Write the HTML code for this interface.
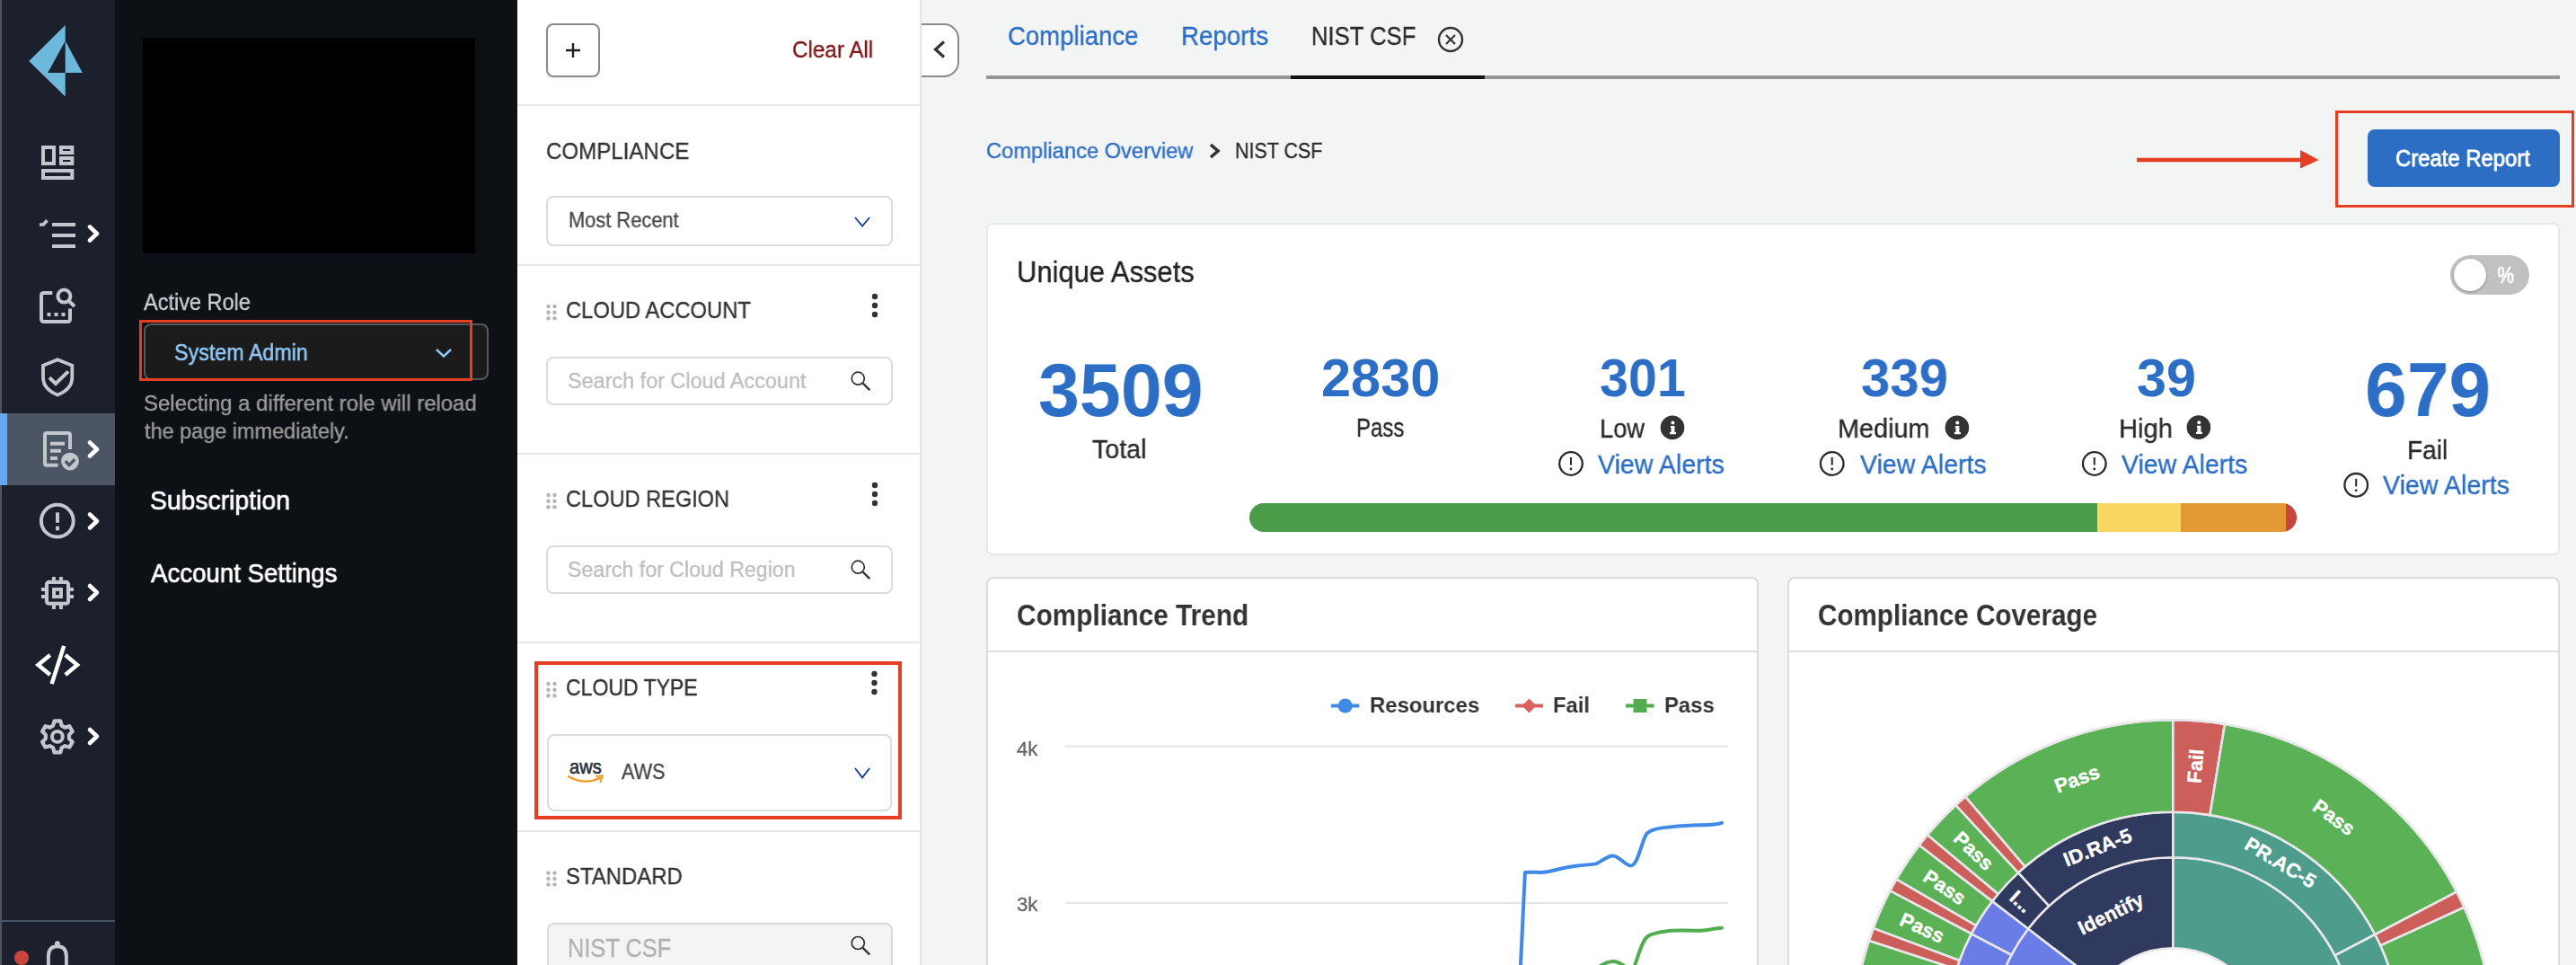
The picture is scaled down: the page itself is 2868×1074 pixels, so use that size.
<!DOCTYPE html>
<html><head><meta charset="utf-8">
<style>
*{margin:0;padding:0;box-sizing:border-box}
html,body{width:2868px;height:1074px;overflow:hidden;background:#f3f4f4;font-family:"Liberation Sans",sans-serif}
.abs{position:absolute}
.t{position:absolute;white-space:nowrap;line-height:1;transform-origin:0 0;will-change:transform}
</style></head><body>
<!-- left strip + sidebar -->
<div class="abs" style="left:0;top:0;width:2px;height:1074px;background:#50555e"></div>
<div class="abs" style="left:2px;top:0;width:126px;height:1074px;background:#1b202c"></div>
<div class="abs" style="left:0;top:460px;width:128px;height:80px;background:#4b5563"></div>
<div class="abs" style="left:0;top:460px;width:8px;height:80px;background:#63a9f6"></div>
<div class="abs" style="left:0;top:1024px;width:128px;height:2px;background:#4a5262"></div>
<!-- panel 2 -->
<div class="abs" style="left:128px;top:0;width:448px;height:1074px;background:#0d1116"></div>
<div class="abs" style="left:159px;top:42px;width:370px;height:240px;background:#000"></div>
<div class="abs" style="left:160px;top:360px;width:384px;height:63px;background:#1b1b1c;border:2px solid #58595b;border-radius:8px"></div>
<div class="abs" style="left:155px;top:356px;width:371px;height:68px;border:3px solid #e63d25"></div>
<!-- filter panel -->
<div class="abs" style="left:576px;top:0;width:448px;height:1074px;background:#fff"></div>
<div class="abs" style="left:1024px;top:0;width:2px;height:1074px;background:#e4e5e5"></div>
<div class="abs" style="left:576px;top:116px;width:448px;height:2px;background:#e8e8e8"></div>
<div class="abs" style="left:576px;top:294px;width:448px;height:2px;background:#e8e8e8"></div>
<div class="abs" style="left:576px;top:504px;width:448px;height:2px;background:#e8e8e8"></div>
<div class="abs" style="left:576px;top:714px;width:448px;height:2px;background:#e8e8e8"></div>
<div class="abs" style="left:576px;top:924px;width:448px;height:2px;background:#e8e8e8"></div>
<div class="abs" style="left:608px;top:26px;width:60px;height:60px;border:2px solid #8a8a8a;border-radius:8px;box-shadow:0 2px 3px rgba(0,0,0,0.05)"></div>
<div class="abs" style="left:608px;top:218px;width:386px;height:56px;border:2px solid #dcdcdc;border-radius:8px"></div>
<div class="abs" style="left:608px;top:397px;width:386px;height:54px;border:2px solid #dcdcdc;border-radius:8px"></div>
<div class="abs" style="left:608px;top:607px;width:386px;height:54px;border:2px solid #dcdcdc;border-radius:8px"></div>
<div class="abs" style="left:609px;top:817px;width:384px;height:86px;border:2px solid #dcdcdc;border-radius:8px"></div>
<div class="abs" style="left:609px;top:1027px;width:385px;height:80px;background:#f4f4f4;border:2px solid #d9d9d9;border-radius:8px"></div>
<div class="abs" style="left:595px;top:736px;width:409px;height:176px;border:4px solid #e63d25"></div>
<!-- main -->
<div class="abs" style="left:1026px;top:26px;width:42px;height:60px;background:#fff;border:2px solid #8a8a8a;border-left:none;border-radius:0 17px 17px 0"></div>
<div class="abs" style="left:1098px;top:84px;width:1752px;height:4px;background:#959595"></div>
<div class="abs" style="left:1437px;top:83.5px;width:216px;height:4.5px;background:#111"></div>
<div class="abs" style="left:2600px;top:123px;width:266px;height:108px;border:3px solid #e63d25"></div>
<div class="abs" style="left:2636px;top:144px;width:214px;height:64px;background:#2d6ec5;border-radius:8px"></div>
<!-- unique assets card -->
<div class="abs" style="left:1098px;top:248px;width:1752px;height:370px;background:#fff;border:2px solid #e7e9e9;border-radius:7px"></div>
<div class="abs" style="left:2728px;top:284px;width:88px;height:44px;background:#c1c1c1;border-radius:22px"></div>
<div class="abs" style="left:2732px;top:288px;width:36px;height:36px;background:#fff;border-radius:50%;box-shadow:0 1px 3px rgba(0,0,0,.3)"></div>
<svg class="abs" style="left:1391px;top:560px" width="1166" height="32" viewBox="0 0 1166 32">
 <defs><clipPath id="pb"><rect x="0" y="0" width="1166" height="32" rx="16" ry="16"/></clipPath></defs>
 <g clip-path="url(#pb)">
  <rect x="0" y="0" width="945" height="32" fill="#4a9c48"/>
  <rect x="944" y="0" width="94" height="32" fill="#f9d660"/>
  <rect x="1037" y="0" width="118" height="32" fill="#e39a35"/>
  <rect x="1154" y="0" width="12" height="32" fill="#c4463e"/>
 </g>
</svg>
<!-- chart cards -->
<div class="abs" style="left:1098px;top:642px;width:860px;height:500px;background:#fff;border:2px solid #dadbdb;border-radius:8px"></div>
<div class="abs" style="left:1100px;top:724px;width:856px;height:2px;background:#dcdddd"></div>
<div class="abs" style="left:1990px;top:642px;width:860px;height:500px;background:#fff;border:2px solid #dadbdb;border-radius:8px"></div>
<div class="abs" style="left:1992px;top:724px;width:856px;height:2px;background:#dcdddd"></div>

<svg class="abs" style="left:0;top:0" width="2868" height="1074" viewBox="0 0 2868 1074">
<defs><clipPath id="cc"><rect x="1993" y="727" width="854" height="347"/></clipPath></defs>
<g clip-path="url(#cc)">
<path d="M2258.03,1033.78 A203.4,203.4 0 0 1 2419.40,954.20 L2419.40,1055.30 A102.3,102.3 0 0 0 2338.24,1095.32 Z" fill="#30395e" stroke="#e9e7ea" stroke-width="2.6"/><path d="M2419.40,954.20 A203.4,203.4 0 0 1 2595.55,1259.30 L2507.99,1208.75 A102.3,102.3 0 0 0 2419.40,1055.30 Z" fill="#4e9c8b" stroke="#e9e7ea" stroke-width="2.6"/><path d="M2243.25,1259.30 A203.4,203.4 0 0 1 2258.03,1033.78 L2338.24,1095.32 A102.3,102.3 0 0 0 2330.81,1208.75 Z" fill="#6a7ce8" stroke="#e9e7ea" stroke-width="2.6"/><path d="M2246.96,971.38 A253.8,253.8 0 0 1 2419.40,903.80 L2419.40,954.20 A203.4,203.4 0 0 0 2281.20,1008.36 Z" fill="#30395e" stroke="#e9e7ea" stroke-width="2.6"/><path d="M2218.05,1003.10 A253.8,253.8 0 0 1 2246.96,971.38 L2281.20,1008.36 A203.4,203.4 0 0 0 2258.03,1033.78 Z" fill="#30395e" stroke="#e9e7ea" stroke-width="2.6"/><path d="M2194.79,1039.43 A253.8,253.8 0 0 1 2218.05,1003.10 L2258.03,1033.78 A203.4,203.4 0 0 0 2239.39,1062.89 Z" fill="#6a7ce8" stroke="#e9e7ea" stroke-width="2.6"/><path d="M2178.02,1079.17 A253.8,253.8 0 0 1 2194.79,1039.43 L2239.39,1062.89 A203.4,203.4 0 0 0 2225.96,1094.75 Z" fill="#6a7ce8" stroke="#e9e7ea" stroke-width="2.6"/><path d="M2168.23,1121.18 A253.8,253.8 0 0 1 2178.02,1079.17 L2225.96,1094.75 A203.4,203.4 0 0 0 2218.10,1128.41 Z" fill="#6a7ce8" stroke="#e9e7ea" stroke-width="2.6"/><path d="M2165.69,1164.24 A253.8,253.8 0 0 1 2168.23,1121.18 L2218.10,1128.41 A203.4,203.4 0 0 0 2216.07,1162.92 Z" fill="#6a7ce8" stroke="#e9e7ea" stroke-width="2.6"/><path d="M2419.40,903.80 A253.8,253.8 0 0 1 2644.32,1040.02 L2599.65,1063.37 A203.4,203.4 0 0 0 2419.40,954.20 Z" fill="#4e9c8b" stroke="#e9e7ea" stroke-width="2.6"/><path d="M2644.32,1040.02 A253.8,253.8 0 0 1 2639.20,1284.50 L2595.55,1259.30 A203.4,203.4 0 0 0 2599.65,1063.37 Z" fill="#4e9c8b" stroke="#e9e7ea" stroke-width="2.6"/><path d="M2188.00,886.67 A356.3,356.3 0 0 1 2419.40,801.30 L2419.40,903.80 A253.8,253.8 0 0 0 2254.57,964.61 Z" fill="#5ab156" stroke="#e9e7ea" stroke-width="2.6"/><path d="M2177.32,896.17 A356.3,356.3 0 0 1 2188.00,886.67 L2254.57,964.61 A253.8,253.8 0 0 0 2246.96,971.38 Z" fill="#cd5f5a" stroke="#e9e7ea" stroke-width="2.6"/><path d="M2145.86,929.29 A356.3,356.3 0 0 1 2177.32,896.17 L2246.96,971.38 A253.8,253.8 0 0 0 2224.55,994.97 Z" fill="#5ab156" stroke="#e9e7ea" stroke-width="2.6"/><path d="M2136.73,940.70 A356.3,356.3 0 0 1 2145.86,929.29 L2224.55,994.97 A253.8,253.8 0 0 0 2218.05,1003.10 Z" fill="#cd5f5a" stroke="#e9e7ea" stroke-width="2.6"/><path d="M2111.30,978.64 A356.3,356.3 0 0 1 2136.73,940.70 L2218.05,1003.10 A253.8,253.8 0 0 0 2199.94,1030.13 Z" fill="#5ab156" stroke="#e9e7ea" stroke-width="2.6"/><path d="M2104.22,991.43 A356.3,356.3 0 0 1 2111.30,978.64 L2199.94,1030.13 A253.8,253.8 0 0 0 2194.89,1039.23 Z" fill="#cd5f5a" stroke="#e9e7ea" stroke-width="2.6"/><path d="M2085.55,1033.11 A356.3,356.3 0 0 1 2104.22,991.43 L2194.89,1039.23 A253.8,253.8 0 0 0 2181.60,1068.92 Z" fill="#5ab156" stroke="#e9e7ea" stroke-width="2.6"/><path d="M2080.73,1046.91 A356.3,356.3 0 0 1 2085.55,1033.11 L2181.60,1068.92 A253.8,253.8 0 0 0 2178.16,1078.75 Z" fill="#cd5f5a" stroke="#e9e7ea" stroke-width="2.6"/><path d="M2069.35,1091.14 A356.3,356.3 0 0 1 2080.73,1046.91 L2178.16,1078.75 A253.8,253.8 0 0 0 2170.05,1110.26 Z" fill="#5ab156" stroke="#e9e7ea" stroke-width="2.6"/><path d="M2066.92,1105.55 A356.3,356.3 0 0 1 2069.35,1091.14 L2170.05,1110.26 A253.8,253.8 0 0 0 2168.32,1120.52 Z" fill="#cd5f5a" stroke="#e9e7ea" stroke-width="2.6"/><path d="M2063.16,1151.07 A356.3,356.3 0 0 1 2066.92,1105.55 L2168.32,1120.52 A253.8,253.8 0 0 0 2165.64,1152.95 Z" fill="#5ab156" stroke="#e9e7ea" stroke-width="2.6"/><path d="M2063.19,1165.68 A356.3,356.3 0 0 1 2063.16,1151.07 L2165.64,1152.95 A253.8,253.8 0 0 0 2165.67,1163.36 Z" fill="#cd5f5a" stroke="#e9e7ea" stroke-width="2.6"/><path d="M2419.40,801.30 A356.3,356.3 0 0 1 2476.98,805.98 L2460.42,907.14 A253.8,253.8 0 0 0 2419.40,903.80 Z" fill="#cd5f5a" stroke="#e9e7ea" stroke-width="2.6"/><path d="M2476.98,805.98 A356.3,356.3 0 0 1 2735.15,992.53 L2644.32,1040.02 A253.8,253.8 0 0 0 2460.42,907.14 Z" fill="#5ab156" stroke="#e9e7ea" stroke-width="2.6"/><path d="M2735.15,992.53 A356.3,356.3 0 0 1 2743.62,1009.84 L2650.35,1052.35 A253.8,253.8 0 0 0 2644.32,1040.02 Z" fill="#cd5f5a" stroke="#e9e7ea" stroke-width="2.6"/><path d="M2743.62,1009.84 A356.3,356.3 0 0 1 2727.96,1335.75 L2639.20,1284.50 A253.8,253.8 0 0 0 2650.35,1052.35 Z" fill="#5ab156" stroke="#e9e7ea" stroke-width="2.6"/>
<circle cx="2419.4" cy="1157.6" r="356.3" fill="none" stroke="#e9e7ea" stroke-width="2.6"/>
<g fill="#ffffff" stroke="#ffffff" stroke-width="0.4" font-family="Liberation Sans" font-weight="700" text-anchor="middle"><text x="2312.4" y="866.7" transform="rotate(-20.2 2312.4 866.7)" font-size="22" dy="0.35em">Pass</text><text x="2444.2" y="852.6" transform="rotate(-85.3 2444.2 852.6)" font-size="22" dy="0.35em">Fail</text><text x="2598.6" y="909.6" transform="rotate(35.9 2598.6 909.6)" font-size="22" dy="0.35em">Pass</text><text x="2539.1" y="960.0" transform="rotate(31.2 2539.1 960.0)" font-size="22" dy="0.35em">PR.AC-5</text><text x="2335.3" y="943.0" transform="rotate(-21.4 2335.3 943.0)" font-size="22" dy="0.35em">ID.RA-5</text><text x="2350.0" y="1016.8" transform="rotate(-26.2 2350.0 1016.8)" font-size="22" dy="0.35em">Identify</text><text x="2250.2" y="1003.3" transform="rotate(42.4 2250.2 1003.3)" font-size="22" dy="0.35em">I...</text><text x="2197.5" y="946.9" transform="rotate(43.5 2197.5 946.9)" font-size="22" dy="0.35em">Pass</text><text x="2165.2" y="987.3" transform="rotate(33.8 2165.2 987.3)" font-size="22" dy="0.35em">Pass</text><text x="2140.1" y="1032.5" transform="rotate(24.1 2140.1 1032.5)" font-size="22" dy="0.35em">Pass</text></g>
</g></svg>

<svg class="abs" style="left:0;top:0" width="2868" height="1074" viewBox="0 0 2868 1074">
 <!-- logo -->
 <path d="M72.7,28.1 L32.2,67.9 L72.7,107.6 Z M72.7,45.4 L53.2,81 L72.7,81 Z" fill="#6cb9dc" fill-rule="evenodd"/>
 <path d="M72.7,45.4 L91.8,81 L72.7,81 Z" fill="#6cb9dc"/>
 <g fill="none" stroke="#c2c6cd" stroke-width="4">
  <!-- dashboard -->
  <rect x="48" y="164" width="12" height="18"/>
  <rect x="68" y="164" width="12.3" height="6"/>
  <rect x="68" y="176" width="12.3" height="6"/>
  <rect x="48" y="190" width="32.3" height="8"/>
  <!-- list -->
  <path d="M58,250 H84 M58,262 H84 M58,274 H84" />
  <path d="M44,250 H48.3 L52.5,245.3" stroke-width="3.6"/>
  <!-- search doc -->
  <path d="M58.3,326 H49 Q46,326 46,329 V355 Q46,358 49,358 H75 Q78,358 78,355 V343.4"/>
  <circle cx="71.4" cy="329.6" r="7"/>
  <path d="M76.5,334.7 L83,341"/>
  <!-- shield -->
  <path d="M64.1,400.3 L48,406.8 V420 Q48,433 64.1,439.6 Q80.3,433 80.3,420 V406.8 Z" stroke-width="3.8"/>
  <path d="M55,420.3 L62,427 L76,413.4" stroke-width="4"/>
  <!-- report -->
  <path d="M64.5,517.8 H52 Q50,517.8 50,515.8 V484 Q50,482 52,482 H76 Q78,482 78,484 V500"/>
  <path d="M56,493.8 H72 M56,501.7 H68 M56,510 H64"/>
  <!-- alert -->
  <circle cx="63.8" cy="579.7" r="17.9"/>
  <!-- chip -->
  <rect x="51.95" y="647.85" width="24.1" height="23.9" rx="2.5" stroke-width="4.1"/>
  <rect x="60.05" y="655.95" width="7.9" height="8.1" stroke-width="4"/>
  <path d="M59.95,642 V648 M67.95,642 V648 M59.95,671.5 V678 M67.95,671.5 V678 M46,655.95 H52 M46,663.95 H52 M76,655.95 H82 M76,663.95 H82" stroke-width="4"/>
  <!-- gear -->
  <circle cx="63.9" cy="819.9" r="5.9"/>
 </g>
 <circle cx="78" cy="513.6" r="9.9" fill="#c2c6cd"/>
 <path d="M72.8,513.3 L77,517.6 L83.2,511.3" fill="none" stroke="#4b5563" stroke-width="3.4"/>
 <rect x="62" y="570.4" width="4" height="11.4" fill="#c2c6cd"/>
 <rect x="62" y="585.7" width="4" height="4.6" fill="#c2c6cd"/>
 <rect x="52.5" y="348" width="4" height="4" fill="#c2c6cd"/>
 <rect x="60.5" y="348" width="4" height="4" fill="#c2c6cd"/>
 <rect x="68.5" y="348" width="4" height="4" fill="#c2c6cd"/>
 <!-- gear teeth -->
 <path id="gear" fill="none" stroke="#c2c6cd" stroke-width="4.2" stroke-linejoin="round" d="M59.17,807.58 L60.50,802.43 L67.30,802.43 L68.63,807.58 L72.21,809.64 L77.33,808.22 L80.73,814.10 L76.94,817.84 L76.94,821.96 L80.73,825.70 L77.33,831.58 L72.21,830.16 L68.63,832.22 L67.30,837.37 L60.50,837.37 L59.17,832.22 L55.59,830.16 L50.47,831.58 L47.07,825.70 L50.86,821.96 L50.86,817.84 L47.07,814.10 L50.47,808.22 L55.59,809.64 Z"/>
 <!-- code -->
 <g fill="none" stroke="#ffffff" stroke-width="4.5" stroke-linecap="square">
  <path d="M54,730.5 L42.5,740 L54,749.5"/>
  <path d="M74.5,730.5 L86,740 L74.5,749.5"/>
  <path d="M70.5,721 L58.3,759"/>
 </g>
 <!-- chevrons -->
 <g fill="none" stroke="#ffffff" stroke-width="4.6" stroke-linecap="round" stroke-linejoin="round">
  <path d="M100,252.5 L108,260 L100,267.5"/>
  <path d="M100,492.5 L108,500 L100,507.5"/>
  <path d="M100,572.5 L108,580 L100,587.5"/>
  <path d="M100,652 L108,659.5 L100,667"/>
  <path d="M100,812 L108,819.5 L100,827"/>
 </g>
 <!-- bottom -->
 <circle cx="24" cy="1066" r="8" fill="#c9463e"/>
 <path d="M53.9,1074 V1064.5 Q53.9,1053.3 63.9,1053.3 Q73.9,1053.3 73.9,1064.5 V1074" fill="none" stroke="#c2c6cd" stroke-width="3.9"/>
 <circle cx="63.9" cy="1050.3" r="3" fill="#c2c6cd"/>
 <!-- role chevron -->
 <path d="M486,389 L494,396.5 L502,389" fill="none" stroke="#8ec6f6" stroke-width="2.4"/>
 <!-- filter icons -->
 <path d="M630,56 H646 M638,48 V64" stroke="#222" stroke-width="2.4"/>
 <path d="M952,242 L960.1,251.6 L968.2,242" fill="none" stroke="#15439a" stroke-width="1.9"/>
 <path d="M952,855 L960.1,865.4 L968.2,855" fill="none" stroke="#15439a" stroke-width="1.9"/>
 <g fill="none" stroke="#333" stroke-width="2.4">
  <circle cx="955.3" cy="421.2" r="7" stroke-width="1.7"/><path d="M960.6,426.5 L968.3,434.2"/>
  <circle cx="955.3" cy="631.2" r="7" stroke-width="1.7"/><path d="M960.6,636.5 L968.3,644.2"/>
  <circle cx="955.3" cy="1049.5" r="7" stroke-width="1.7"/><path d="M960.6,1054.8 L968.3,1062.5"/>
 </g>
 <g fill="#333">
  <circle cx="974" cy="330" r="3.2"/><circle cx="974" cy="340" r="3.2"/><circle cx="974" cy="350" r="3.2"/>
  <circle cx="974" cy="540" r="3.2"/><circle cx="974" cy="550" r="3.2"/><circle cx="974" cy="560" r="3.2"/>
  <circle cx="973.5" cy="750" r="3.2"/><circle cx="973.5" cy="760" r="3.2"/><circle cx="973.5" cy="770" r="3.2"/>
 </g>
 <g fill="#b3b3b3">
  <circle cx="610.5" cy="341" r="2.2"/><circle cx="617.5" cy="341" r="2.2"/>
  <circle cx="610.5" cy="347.7" r="2.2"/><circle cx="617.5" cy="347.7" r="2.2"/>
  <circle cx="610.5" cy="354.3" r="2.2"/><circle cx="617.5" cy="354.3" r="2.2"/>
  <circle cx="610.5" cy="551" r="2.2"/><circle cx="617.5" cy="551" r="2.2"/>
  <circle cx="610.5" cy="557.7" r="2.2"/><circle cx="617.5" cy="557.7" r="2.2"/>
  <circle cx="610.5" cy="564.3" r="2.2"/><circle cx="617.5" cy="564.3" r="2.2"/>
  <circle cx="610.5" cy="761" r="2.2"/><circle cx="617.5" cy="761" r="2.2"/>
  <circle cx="610.5" cy="767.7" r="2.2"/><circle cx="617.5" cy="767.7" r="2.2"/>
  <circle cx="610.5" cy="774.3" r="2.2"/><circle cx="617.5" cy="774.3" r="2.2"/>
  <circle cx="610.5" cy="971.6" r="2.2"/><circle cx="617.5" cy="971.6" r="2.2"/>
  <circle cx="610.5" cy="978" r="2.2"/><circle cx="617.5" cy="978" r="2.2"/>
  <circle cx="610.5" cy="984.4" r="2.2"/><circle cx="617.5" cy="984.4" r="2.2"/>
 </g>
 <!-- aws logo -->
 <text x="634" y="860.8" font-family="Liberation Sans" font-size="22" font-weight="400" fill="#232f3e" stroke="#232f3e" stroke-width="0.6" textLength="35.7" lengthAdjust="spacingAndGlyphs">aws</text>
 <path d="M633,864.2 Q651,874 667.9,866" fill="none" stroke="#f29a1e" stroke-width="2.3" stroke-linecap="round"/>
 <path d="M664.4,864 L671,863.2 L668.5,870" fill="none" stroke="#f29a1e" stroke-width="2" stroke-linejoin="round" stroke-linecap="round"/>
 <!-- collapse chevron -->
 <path d="M1051,46.5 L1041.5,55 L1051,63.5" fill="none" stroke="#333" stroke-width="3.2"/>
 <!-- tab close -->
 <circle cx="1615" cy="44" r="13" fill="none" stroke="#333" stroke-width="2.4"/>
 <path d="M1610,39 L1620,49 M1620,39 L1610,49" stroke="#333" stroke-width="2.2"/>
 <!-- breadcrumb chevron -->
 <path d="M1348,161 L1356,168 L1348,175" fill="none" stroke="#333" stroke-width="3.6"/>
 <!-- arrow -->
 <path d="M2379,178 H2563" stroke="#e63d25" stroke-width="4.5"/>
 <path d="M2561,167 L2581.6,178 L2561,187.5 Z" fill="#e63d25"/>
 <!-- toggle % -->
 <text x="2780.5" y="315.2" font-family="Liberation Sans" font-size="25" font-weight="400" fill="#fff" stroke="#fff" stroke-width="0.7" textLength="18.5" lengthAdjust="spacingAndGlyphs">%</text>
 <!-- info icons -->
 <g>
  <circle cx="1862" cy="475.9" r="13.3" fill="#333"/>
  <circle cx="2178.9" cy="475.9" r="13.3" fill="#333"/>
  <circle cx="2447.9" cy="475.6" r="13.3" fill="#333"/>
 </g>
 <g fill="#fff">
  <circle cx="1862.4" cy="470.5" r="2"/><path d="M1860,474 H1864.5 V481 H1866 V483.3 H1859 V481 H1860.5 V476 H1860 Z"/>
  <circle cx="2179.3" cy="470.5" r="2"/><path d="M2176.9,474 H2181.4 V481 H2182.9 V483.3 H2175.9 V481 H2177.4 V476 H2176.9 Z"/>
  <circle cx="2448.3" cy="470.2" r="2"/><path d="M2445.9,473.7 H2450.4 V480.7 H2451.9 V483 H2444.9 V480.7 H2446.4 V475.7 H2445.9 Z"/>
 </g>
 <g fill="none" stroke="#2a2a2a" stroke-width="2.3">
  <circle cx="1749" cy="516" r="12.8"/>
  <circle cx="2039.7" cy="516" r="12.8"/>
  <circle cx="2331.8" cy="516" r="12.8"/>
  <circle cx="2623.2" cy="539.8" r="12.8"/>
 </g>
 <g fill="#2a2a2a">
  <rect x="1748" y="509" width="2" height="8.6"/><circle cx="1749" cy="522" r="1.4"/>
  <rect x="2038.7" y="509" width="2" height="8.6"/><circle cx="2039.7" cy="522" r="1.4"/>
  <rect x="2330.8" y="509" width="2" height="8.6"/><circle cx="2331.8" cy="522" r="1.4"/>
  <rect x="2622.2" y="532.8" width="2" height="8.6"/><circle cx="2623.2" cy="545.8" r="1.4"/>
 </g>
 <!-- trend chart -->
 <path d="M1185.7,830.6 H1924 M1185.7,1005 H1924" stroke="#e6e6e6" stroke-width="2.2"/>
 <path d="M1482,785.5 H1513.4" stroke="#3f8ae6" stroke-width="4"/><circle cx="1497.7" cy="785.5" r="8" fill="#3f8ae6"/>
 <path d="M1687,785.5 H1718" stroke="#d9625e" stroke-width="4"/><path d="M1702.5,777.5 L1710.5,785.5 L1702.5,793.5 L1694.5,785.5 Z" fill="#d9625e"/>
 <path d="M1810,785.5 H1841.5" stroke="#52ad50" stroke-width="4"/><rect x="1818.5" y="778" width="15" height="15" fill="#52ad50"/>
 <path d="M1692.7,1080 L1697.9,971 C1700,970.5 1712,971 1716.4,970.9 C1722,970.5 1726,970 1730.5,968.5 C1740,966 1750,964 1756.6,963.4 C1765,962.5 1770,962.5 1776.7,961.4 C1783,959 1789,952.4 1795.8,952.4 C1803,952.4 1809,963.4 1815.9,963.4 C1824,963.4 1828,933 1834,927.2 C1840,922 1850,921.5 1861.1,920.2 C1872,919 1885,918.5 1895.3,918.2 C1905,918 1912,917.5 1917,915.8" fill="none" stroke="#4089e6" stroke-width="4" stroke-linejoin="round" stroke-linecap="round"/>
 <path d="M1780,1076 C1786,1072 1791,1070 1796.4,1070 C1802,1070 1806,1074 1810,1076 M1818,1080 C1824,1065 1828,1046 1835,1041.8 C1842,1037.5 1852,1037 1861,1035.8 C1872,1035 1882,1035.5 1891.3,1035.8 C1900,1035.5 1910,1033 1917,1032.8" fill="none" stroke="#52ad50" stroke-width="4" stroke-linejoin="round" stroke-linecap="round"/>
</svg>

<div class="t" style="left:160.10px;top:323.67px;font-size:25.44px;font-weight:400;color:#cbced4;transform:scaleX(0.9245);-webkit-text-stroke:0.35px #cbced4">Active Role</div>
<div class="t" style="left:193.67px;top:380.04px;font-size:25.0px;font-weight:400;color:#8ec8f8;transform:scaleX(0.9318);-webkit-text-stroke:0.5px #8ec8f8">System Admin</div>
<div class="t" style="left:159.60px;top:436.50px;font-size:23.98px;font-weight:400;color:#9c9c9c;transform:scaleX(0.9985);-webkit-text-stroke:0.35px #9c9c9c">Selecting a different role will reload</div>
<div class="t" style="left:160.90px;top:468.20px;font-size:23.98px;font-weight:400;color:#9c9c9c;transform:scaleX(0.9781);-webkit-text-stroke:0.35px #9c9c9c">the page immediately.</div>
<div class="t" style="left:167.04px;top:542.02px;font-size:29.51px;font-weight:400;color:#ffffff;transform:scaleX(0.9604);-webkit-text-stroke:0.7px #ffffff">Subscription</div>
<div class="t" style="left:168.00px;top:622.72px;font-size:29.51px;font-weight:400;color:#ffffff;transform:scaleX(0.9369);-webkit-text-stroke:0.7px #ffffff">Account Settings</div>
<div class="t" style="left:881.96px;top:43.32px;font-size:25.73px;font-weight:400;color:#801313;transform:scaleX(0.9421);-webkit-text-stroke:0.35px #801313">Clear All</div>
<div class="t" style="left:607.97px;top:155.07px;font-size:26.02px;font-weight:400;color:#333333;transform:scaleX(0.9263);-webkit-text-stroke:0.35px #333333">COMPLIANCE</div>
<div class="t" style="left:632.76px;top:234.31px;font-size:23.26px;font-weight:400;color:#4a4a4a;transform:scaleX(0.9404);-webkit-text-stroke:0.35px #4a4a4a">Most Recent</div>
<div class="t" style="left:630.08px;top:333.22px;font-size:25.73px;font-weight:400;color:#333333;transform:scaleX(0.9234);-webkit-text-stroke:0.35px #333333">CLOUD ACCOUNT</div>
<div class="t" style="left:631.64px;top:412.33px;font-size:24.42px;font-weight:400;color:#bdbdbd;transform:scaleX(0.9592);-webkit-text-stroke:0.35px #bdbdbd">Search for Cloud Account</div>
<div class="t" style="left:630.08px;top:543.22px;font-size:25.73px;font-weight:400;color:#333333;transform:scaleX(0.9166);-webkit-text-stroke:0.35px #333333">CLOUD REGION</div>
<div class="t" style="left:631.65px;top:622.33px;font-size:24.42px;font-weight:400;color:#bdbdbd;transform:scaleX(0.9490);-webkit-text-stroke:0.35px #bdbdbd">Search for Cloud Region</div>
<div class="t" style="left:630.01px;top:753.22px;font-size:25.73px;font-weight:400;color:#333333;transform:scaleX(0.8947);-webkit-text-stroke:0.35px #333333">CLOUD TYPE</div>
<div class="t" style="left:692.00px;top:848.34px;font-size:23.11px;font-weight:400;color:#474747;transform:scaleX(0.9383);-webkit-text-stroke:0.35px #474747">AWS</div>
<div class="t" style="left:629.87px;top:963.22px;font-size:25.73px;font-weight:400;color:#333333;transform:scaleX(0.9298);-webkit-text-stroke:0.35px #333333">STANDARD</div>
<div class="t" style="left:632.27px;top:1040.15px;font-size:29.36px;font-weight:400;color:#b0b0b0;transform:scaleX(0.8646);-webkit-text-stroke:0.35px #b0b0b0">NIST CSF</div>
<div class="t" style="left:1122.06px;top:26.47px;font-size:29.22px;font-weight:400;color:#2c6dc6;transform:scaleX(0.9426);-webkit-text-stroke:0.35px #2c6dc6">Compliance</div>
<div class="t" style="left:1315.00px;top:26.47px;font-size:29.22px;font-weight:400;color:#2c6dc6;transform:scaleX(0.9499);-webkit-text-stroke:0.35px #2c6dc6">Reports</div>
<div class="t" style="left:1459.65px;top:26.47px;font-size:29.22px;font-weight:400;color:#2a2a2a;transform:scaleX(0.8775);-webkit-text-stroke:0.35px #2a2a2a">NIST CSF</div>
<div class="t" style="left:1098.11px;top:156.40px;font-size:23.98px;font-weight:400;color:#2c6dc6;transform:scaleX(0.9884);-webkit-text-stroke:0.35px #2c6dc6">Compliance Overview</div>
<div class="t" style="left:1374.89px;top:156.76px;font-size:23.55px;font-weight:400;color:#2a2a2a;transform:scaleX(0.9113);-webkit-text-stroke:0.35px #2a2a2a">NIST CSF</div>
<div class="t" style="left:2667.45px;top:163.71px;font-size:25.15px;font-weight:400;color:#ffffff;transform:scaleX(0.9495);-webkit-text-stroke:0.8px #ffffff">Create Report</div>
<div class="t" style="left:1132.25px;top:285.70px;font-size:33.43px;font-weight:400;color:#222222;transform:scaleX(0.9253);-webkit-text-stroke:0.35px #222222">Unique Assets</div>
<div class="t" style="left:1155.72px;top:391.85px;font-size:84.29px;font-weight:700;color:#2c6dc6;transform:scaleX(0.9797)">3509</div>
<div class="t" style="left:1216.00px;top:486.39px;font-size:29.07px;font-weight:400;color:#2a2a2a;transform:scaleX(0.9845);-webkit-text-stroke:0.35px #2a2a2a">Total</div>
<div class="t" style="left:1470.99px;top:391.01px;font-size:59.29px;font-weight:700;color:#2c6dc6;transform:scaleX(1.0031)">2830</div>
<div class="t" style="left:1510.34px;top:462.32px;font-size:28.92px;font-weight:400;color:#2a2a2a;transform:scaleX(0.8316);-webkit-text-stroke:0.35px #2a2a2a">Pass</div>
<div class="t" style="left:1780.63px;top:391.41px;font-size:59.29px;font-weight:700;color:#2c6dc6;transform:scaleX(0.9676)">301</div>
<div class="t" style="left:1780.85px;top:462.22px;font-size:29.51px;font-weight:400;color:#2a2a2a;transform:scaleX(0.9240);-webkit-text-stroke:0.35px #2a2a2a">Low</div>
<div class="t" style="left:1779.40px;top:501.86px;font-size:29.94px;font-weight:400;color:#2c6dc6;transform:scaleX(0.9553);-webkit-text-stroke:0.35px #2c6dc6">View Alerts</div>
<div class="t" style="left:2072.02px;top:391.41px;font-size:59.29px;font-weight:700;color:#2c6dc6;transform:scaleX(0.9798)">339</div>
<div class="t" style="left:2046.05px;top:462.22px;font-size:29.51px;font-weight:400;color:#2a2a2a;transform:scaleX(0.9768);-webkit-text-stroke:0.35px #2a2a2a">Medium</div>
<div class="t" style="left:2070.60px;top:501.86px;font-size:29.94px;font-weight:400;color:#2c6dc6;transform:scaleX(0.9540);-webkit-text-stroke:0.35px #2c6dc6">View Alerts</div>
<div class="t" style="left:2379.00px;top:391.41px;font-size:59.29px;font-weight:700;color:#2c6dc6;transform:scaleX(1.0005)">39</div>
<div class="t" style="left:2358.82px;top:462.22px;font-size:29.51px;font-weight:400;color:#2a2a2a;transform:scaleX(0.9884);-webkit-text-stroke:0.35px #2a2a2a">High</div>
<div class="t" style="left:2362.00px;top:501.86px;font-size:29.94px;font-weight:400;color:#2c6dc6;transform:scaleX(0.9513);-webkit-text-stroke:0.35px #2c6dc6">View Alerts</div>
<div class="t" style="left:2632.76px;top:391.45px;font-size:85.71px;font-weight:700;color:#2c6dc6;transform:scaleX(0.9809)">679</div>
<div class="t" style="left:2679.60px;top:485.92px;font-size:29.51px;font-weight:400;color:#2a2a2a;transform:scaleX(0.9504);-webkit-text-stroke:0.35px #2a2a2a">Fail</div>
<div class="t" style="left:2653.00px;top:525.36px;font-size:29.94px;font-weight:400;color:#2c6dc6;transform:scaleX(0.9560);-webkit-text-stroke:0.35px #2c6dc6">View Alerts</div>
<div class="t" style="left:1131.81px;top:667.70px;font-size:33.43px;font-weight:700;color:#333333;transform:scaleX(0.8911)">Compliance Trend</div>
<div class="t" style="left:2023.51px;top:667.70px;font-size:33.43px;font-weight:700;color:#333333;transform:scaleX(0.8859)">Compliance Coverage</div>
<div class="t" style="left:1524.63px;top:772.91px;font-size:24.56px;font-weight:700;color:#333333;transform:scaleX(0.9728)">Resources</div>
<div class="t" style="left:1729.03px;top:772.91px;font-size:24.56px;font-weight:700;color:#333333;transform:scaleX(0.9662)">Fail</div>
<div class="t" style="left:1852.53px;top:772.91px;font-size:24.56px;font-weight:700;color:#333333;transform:scaleX(0.9717)">Pass</div>
<div class="t" style="left:1132.30px;top:823.45px;font-size:21.8px;font-weight:400;color:#666666;transform:scaleX(1.0163);-webkit-text-stroke:0.35px #666666">4k</div>
<div class="t" style="left:1132.30px;top:996.25px;font-size:21.8px;font-weight:400;color:#666666;transform:scaleX(1.0163);-webkit-text-stroke:0.35px #666666">3k</div>
</body></html>
